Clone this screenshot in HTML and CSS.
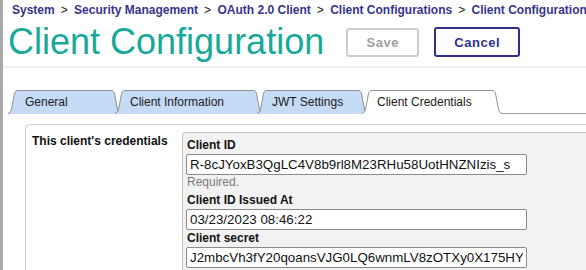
FILE: index.html
```html
<!DOCTYPE html>
<html lang="en">
<head>
    <meta charset="UTF-8">
    <meta name="viewport" content="width=device-width, initial-scale=1.0">
    <title>Client Configuration</title>
    <link rel="stylesheet" href="styles.css">
</head>
<body>
<div class="page">
    <header class="page-header">
        <nav class="breadcrumb">
            <a href="#">System</a><span class="sep">&gt;</span>
            <a href="#">Security Management</a><span class="sep">&gt;</span>
            <a href="#">OAuth 2.0 Client</a><span class="sep">&gt;</span>
            <a href="#">Client Configurations</a><span class="sep">&gt;</span>
            <a href="#">Client Configuration</a>
        </nav>
        <div class="title-row">
            <h1>Client Configuration</h1>
            <button class="btn btn-save" disabled>Save</button>
            <button class="btn btn-cancel">Cancel</button>
        </div>
    </header>

    <div class="tabs">
        <div class="tab tab-general">
            <svg class="tab-cap" viewBox="0 0 10 24"><path class="tab-fill" d="M0 23.5 C2 23.2 3 21.5 3.8 18 L6.3 4.5 C6.8 2 7.8 0.5 10 0.5 L10 24 L0 24 Z"/><path class="tab-edge" d="M0 23.5 C2 23.2 3 21.5 3.8 18 L6.3 4.5 C6.8 2 7.8 0.5 10 0.5"/></svg>
            <span class="tab-label">General</span>
            <svg class="tab-cap tab-cap-right" viewBox="0 0 10 24"><path class="tab-fill" d="M0 23.5 C2 23.2 3 21.5 3.8 18 L6.3 4.5 C6.8 2 7.8 0.5 10 0.5 L10 24 L0 24 Z"/><path class="tab-edge" d="M0 23.5 C2 23.2 3 21.5 3.8 18 L6.3 4.5 C6.8 2 7.8 0.5 10 0.5"/></svg>
        </div>
        <div class="tab tab-info">
            <svg class="tab-cap" viewBox="0 0 10 24"><path class="tab-fill" d="M0 23.5 C2 23.2 3 21.5 3.8 18 L6.3 4.5 C6.8 2 7.8 0.5 10 0.5 L10 24 L0 24 Z"/><path class="tab-edge" d="M0 23.5 C2 23.2 3 21.5 3.8 18 L6.3 4.5 C6.8 2 7.8 0.5 10 0.5"/></svg>
            <span class="tab-label">Client Information</span>
            <svg class="tab-cap tab-cap-right" viewBox="0 0 10 24"><path class="tab-fill" d="M0 23.5 C2 23.2 3 21.5 3.8 18 L6.3 4.5 C6.8 2 7.8 0.5 10 0.5 L10 24 L0 24 Z"/><path class="tab-edge" d="M0 23.5 C2 23.2 3 21.5 3.8 18 L6.3 4.5 C6.8 2 7.8 0.5 10 0.5"/></svg>
        </div>
        <div class="tab tab-jwt">
            <svg class="tab-cap" viewBox="0 0 10 24"><path class="tab-fill" d="M0 23.5 C2 23.2 3 21.5 3.8 18 L6.3 4.5 C6.8 2 7.8 0.5 10 0.5 L10 24 L0 24 Z"/><path class="tab-edge" d="M0 23.5 C2 23.2 3 21.5 3.8 18 L6.3 4.5 C6.8 2 7.8 0.5 10 0.5"/></svg>
            <span class="tab-label">JWT Settings</span>
            <svg class="tab-cap tab-cap-right" viewBox="0 0 10 24"><path class="tab-fill" d="M0 23.5 C2 23.2 3 21.5 3.8 18 L6.3 4.5 C6.8 2 7.8 0.5 10 0.5 L10 24 L0 24 Z"/><path class="tab-edge" d="M0 23.5 C2 23.2 3 21.5 3.8 18 L6.3 4.5 C6.8 2 7.8 0.5 10 0.5"/></svg>
        </div>
        <div class="tab tab-credentials active">
            <svg class="tab-cap" viewBox="0 0 10 24"><path class="tab-fill" d="M0 23.5 C2 23.2 3 21.5 3.8 18 L6.3 4.5 C6.8 2 7.8 0.5 10 0.5 L10 24 L0 24 Z"/><path class="tab-edge" d="M0 23.5 C2 23.2 3 21.5 3.8 18 L6.3 4.5 C6.8 2 7.8 0.5 10 0.5"/></svg>
            <span class="tab-label">Client Credentials</span>
            <svg class="tab-cap tab-cap-right" viewBox="0 0 10 24"><path class="tab-fill" d="M0 23.5 C2 23.2 3 21.5 3.8 18 L6.3 4.5 C6.8 2 7.8 0.5 10 0.5 L10 24 L0 24 Z"/><path class="tab-edge" d="M0 23.5 C2 23.2 3 21.5 3.8 18 L6.3 4.5 C6.8 2 7.8 0.5 10 0.5"/></svg>
        </div>
        <div class="tab-rest"></div>
    </div>

    <div class="panel">
        <div class="panel-label">This client's credentials</div>
        <div class="fields">
            <div class="field">
                <label for="clientId">Client ID</label>
                <input id="clientId" type="text" value="R-8cJYoxB3QgLC4V8b9rl8M23RHu58UotHNZNIzis_s">
                <div class="help">Required.</div>
            </div>
            <div class="field">
                <label for="issuedAt">Client ID Issued At</label>
                <input id="issuedAt" type="text" value="03/23/2023 08:46:22">
            </div>
            <div class="field">
                <label for="secret">Client secret</label>
                <input id="secret" type="text" value="J2mbcVh3fY20qoansVJG0LQ6wnmLV8zOTXy0X175HY">
            </div>
        </div>
    </div>
</div>
</body>
</html>
```

FILE: styles.css
```css
body {
    margin: 0;
    font-family: "Liberation Sans", Arial, sans-serif;
    background-color: #fff;
    overflow: hidden;
}

.page {
    border-left: 3px solid #a9a9a9;
    min-height: 100vh;
}

.page-header {
    padding: 2px 0 4px 5px;
    border-bottom: 2px solid #eeeeee;
}

.breadcrumb {
    padding-left: 4px;
    font-size: 12px;
    line-height: 16px;
    white-space: nowrap;
}

.breadcrumb a {
    color: #35358c;
    font-weight: bold;
    text-decoration: none;
}

.breadcrumb .sep {
    color: #222;
    margin: 0 3px 0 6px;
}

.title-row {
    display: flex;
    align-items: center;
    margin-top: 4px;
}

h1 {
    margin: 0 22px 0 0;
    font-size: 36px;
    line-height: 40px;
    font-weight: normal;
    color: #19a99b;
}

.btn {
    font-family: "Liberation Sans", Arial, sans-serif;
    font-size: 13px;
    font-weight: bold;
    letter-spacing: 0.5px;
    background-color: #fff;
    border-radius: 3px;
    cursor: pointer;
}

.btn-save {
    width: 73px;
    height: 29px;
    border: 2px solid #cccccc;
    color: #a0a0a0;
    margin-right: 15px;
}

.btn-cancel {
    width: 86px;
    height: 30px;
    border: 2px solid #2f2f8e;
    color: #2f2f8e;
}

.tabs {
    display: flex;
    margin: 22px 0 0 5px;
    height: 24px;
}

.tab {
    display: flex;
    position: relative;
    height: 24px;
    margin-left: -6px;
}

.tab:first-child {
    margin-left: 0;
}

.tab.active {
    z-index: 2;
}

.tab-cap {
    width: 10px;
    height: 24px;
    flex: none;
}

.tab-cap-right {
    transform: scaleX(-1);
}

.tab-fill {
    fill: #c5dbf6;
}

.tab-edge {
    fill: none;
    stroke: #8f8f8f;
    stroke-width: 1;
}

.tab-label {
    background-color: #c5dbf6;
    border-top: 1px solid #8f8f8f;
    box-sizing: border-box;
    height: 24px;
    padding-left: 5px;
    font-size: 12px;
    line-height: 22px;
    color: #1a1a1a;
    white-space: nowrap;
}

.tab.active .tab-fill,
.tab.active .tab-label {
    background-color: #fff;
    fill: #fff;
}

.tab-general .tab-label { width: 93px; padding-left: 7px; }
.tab-info .tab-label { width: 128px; }
.tab-jwt .tab-label { width: 91px; }
.tab-credentials .tab-label { width: 120px; }

.tab-rest {
    flex: 1;
    border-bottom: 1px solid #a0a0a0;
    margin-left: -1px;
}

.panel {
    display: flex;
    margin: 10px 0 0 22px;
    padding: 7px 0 0 6px;
    border-top: 1px solid #cccccc;
    border-left: 1px solid #cccccc;
    border-top-left-radius: 6px;
}

.panel-label {
    width: 150px;
    flex: none;
    padding-top: 1px;
    font-size: 12px;
    line-height: 16px;
    font-weight: bold;
    color: #111;
}

.fields {
    flex: 1;
    background-color: #f3f2f3;
    border-top: 1px solid #c2c2c2;
    border-left: 1px solid #c2c2c2;
    border-top-left-radius: 4px;
    padding: 4px 0 0 4px;
    min-height: 200px;
}

.field label {
    display: block;
    font-size: 12px;
    line-height: 17px;
    font-weight: bold;
    color: #111;
}

.field input {
    display: block;
    box-sizing: border-box;
    width: 341px;
    height: 21px;
    margin-left: -1px;
    padding: 0 3px;
    border: 1px solid #8a8a8a;
    border-radius: 2px;
    font-family: "Liberation Sans", Arial, sans-serif;
    font-size: 13.33px;
    color: #111;
    background-color: #fff;
}

.help {
    font-size: 12px;
    line-height: 15px;
    color: #7a7a7a;
    margin-bottom: 2px;
}
```
